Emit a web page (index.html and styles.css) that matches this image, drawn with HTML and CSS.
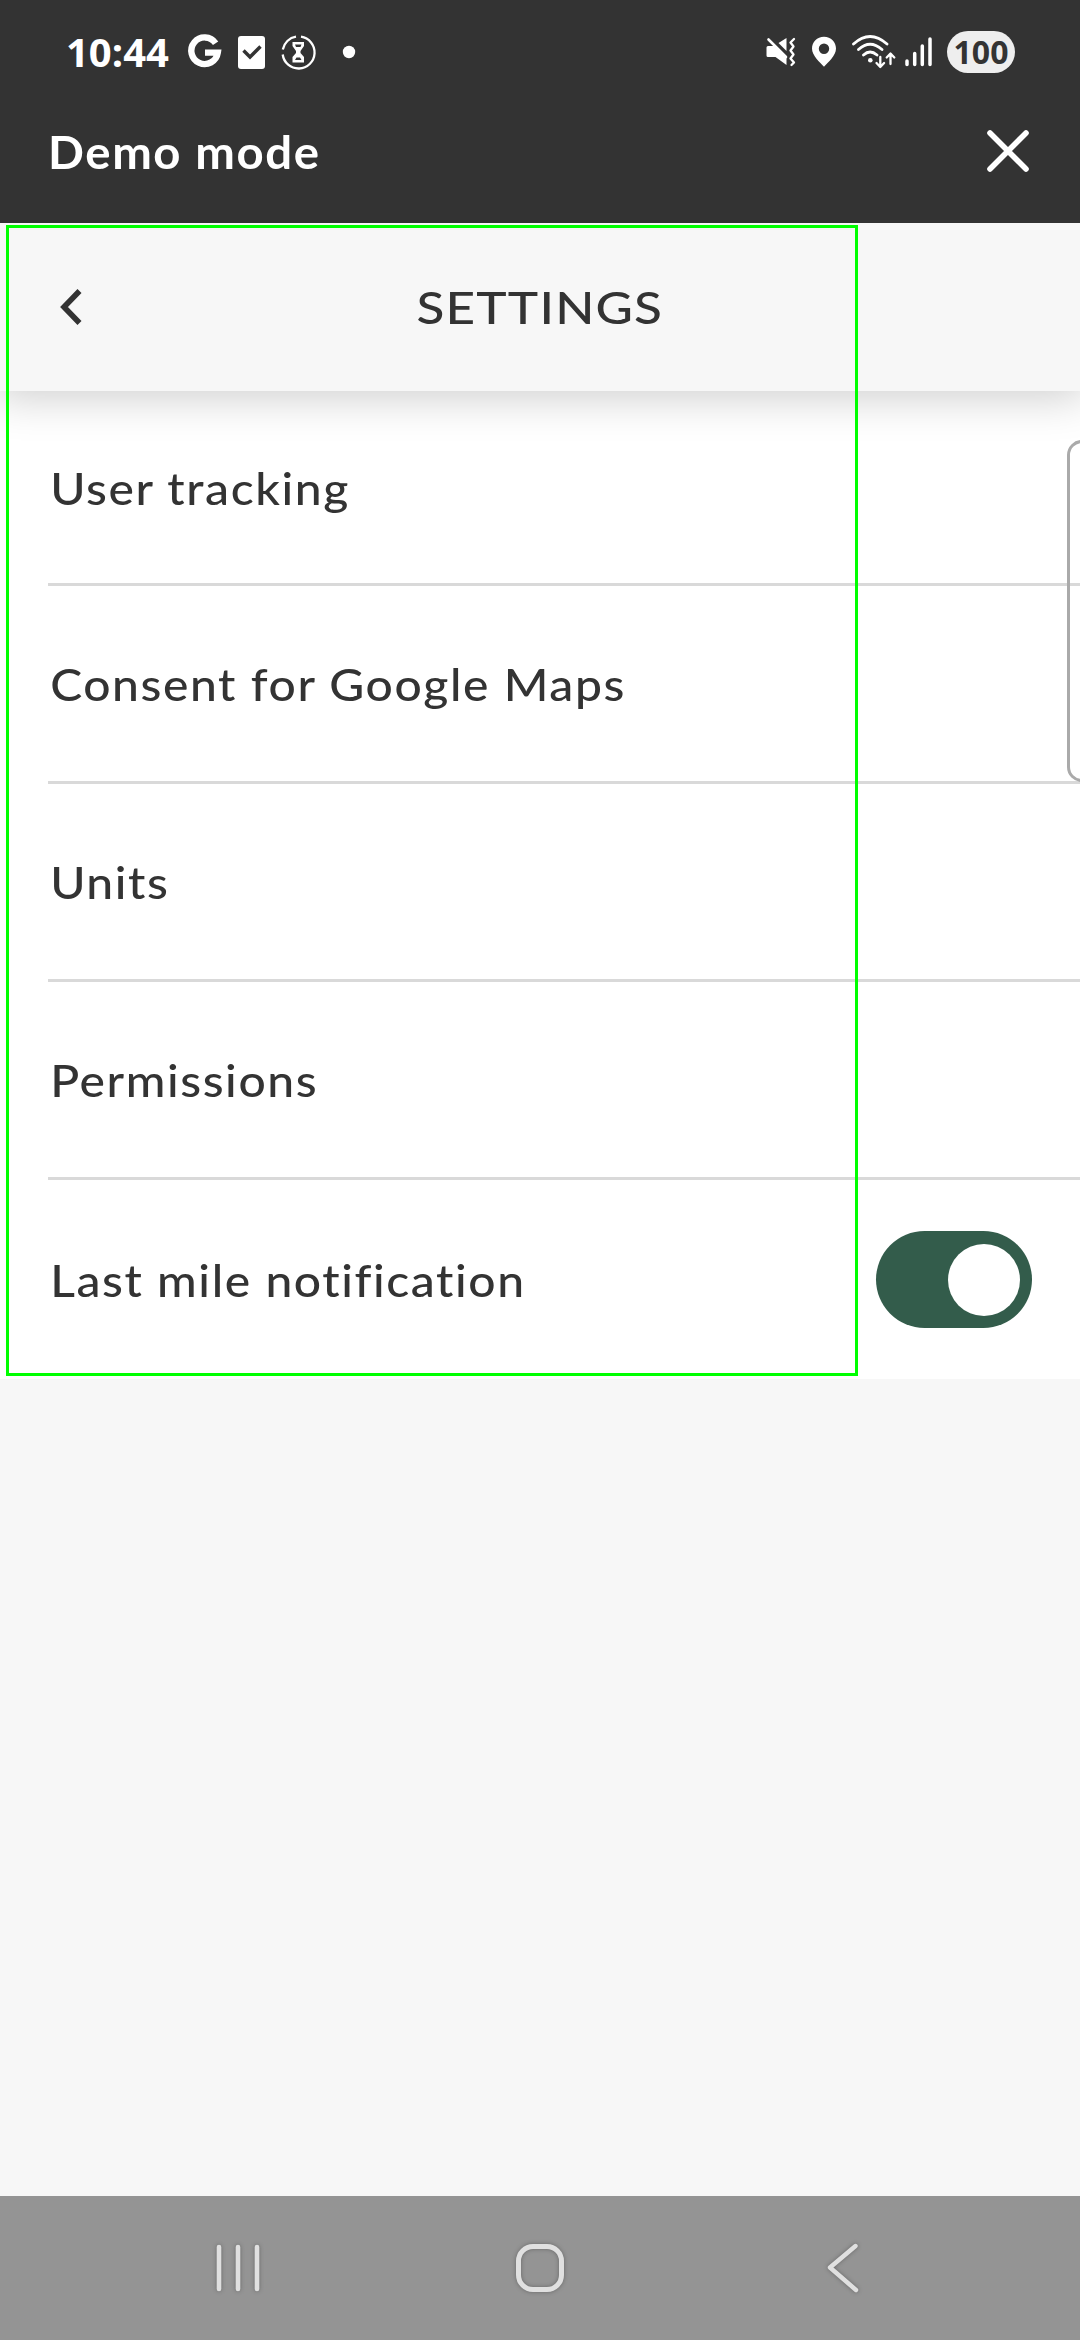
FILE: index.html
```html
<!DOCTYPE html>
<html lang="en">
<head>
<meta charset="utf-8">
<title>Settings</title>
<link rel="stylesheet" href="styles.css">
</head>
<body>
<div class="screen">
  <div class="top">
    <div class="status">
      <span class="clock">10:44</span>
      <svg class="left-icons" width="172" height="42" viewBox="186 31 172 42" fill="none">
        <path d="M215.600 43.200A13.300 13.300 0 1 0 217.800 52.600H205" stroke="#fff" stroke-width="6.400"/>
        <rect x="238" y="36" width="27" height="33" rx="3" fill="#fff"/>
        <path d="M243.500 50.500L250 57L260.500 46.500" stroke="#333" stroke-width="3.400"/>
        <path d="M301 36.700A16 16 0 1 1 282.700 54.500M282.800 49.500A16 16 0 0 1 296 36.700" stroke="#fff" stroke-width="2.300"/>
        <path d="M292.500 42H304V46L300.500 51V53L304 57V62.500H292.500V57L296 53V51L292.500 46Z" fill="#fff"/>
        <path d="M295 44.500H301.500L300.500 47H296ZM295 60L296.500 57.500H300L301.500 60Z" fill="#333"/>
        <circle cx="349" cy="52" r="6.200" fill="#fff"/>
      </svg>
      <svg class="right-icons" width="170" height="42" viewBox="765 31 170 42" fill="none" stroke="#fff" stroke-linecap="round" stroke-linejoin="round">
        <path d="M768 46H775.500L786.500 57V65L775.500 57H768Q766.500 57 766.500 55.500V47.500Q766.500 46 768 46ZM778.500 43L786.500 38V51Z" fill="#fff" stroke="none"/>
        <path d="M768.500 39.500L786 57" stroke-width="2.600"/>
        <path d="M794 39L790.500 42.500L793.500 46.500L790.500 50.500L793.500 54.500L790.500 58.500L794 62.500L791.500 65" stroke-width="2.300"/>
        <path fill-rule="evenodd" d="M824 36.700C817 36.700 812 42 812 48.500C812 56 820 62 824 66.800C828 62 836 56 836 48.500C836 42 831 36.700 824 36.700ZM824 43.500A5.200 5.200 0 1 1 824 53.900A5.200 5.200 0 1 1 824 43.500Z" fill="#fff" stroke="none"/>
        <path d="M853.500 44Q870 29 887 44M858.500 49.500Q870 39 882 49.500M863.500 55Q870 49 877 55" stroke-width="2.800"/>
        <circle cx="870.300" cy="60.300" r="2.300" fill="#fff" stroke="none"/>
        <path d="M880.300 57V66.500M876.500 63L880.300 67L884.100 63M890.500 64V54M886.700 57.500L890.500 53.500L894.300 57.500" stroke-width="2.300"/>
        <path d="M907 61V64.500M914.700 53.500V64.500M922.300 46V64.500M930 39V64.500" stroke-width="3.500"/>
      </svg>
      <span class="battery">100</span>
    </div>
    <div class="demo">
      <span class="demo-title">Demo mode</span>
      <svg width="42" height="42" viewBox="0 0 42 42"><path d="M3 3L39 39M39 3L3 39" stroke="#fff" stroke-width="5.600" stroke-linecap="round"/></svg>
    </div>
  </div>
  <div class="header">
    <svg width="22" height="36" viewBox="0 0 22 36"><path d="M19.500 2L4 18L19.500 34" fill="none" stroke="#333" stroke-width="5.600"/></svg>
    <h1 class="title">SETTINGS</h1>
  </div>
  <div class="list">
    <div class="row first"><span class="label">User tracking</span></div>
    <div class="row"><span class="label">Consent for Google Maps</span></div>
    <div class="row"><span class="label">Units</span></div>
    <div class="row"><span class="label">Permissions</span></div>
    <div class="row last"><span class="label">Last mile notification</span><span class="toggle"><span class="knob"></span></span></div>
  </div>
  <div class="nav">
    <svg width="1080" height="144" viewBox="0 2196 1080 144" fill="none" stroke="#e0e0e0" stroke-linecap="round" stroke-linejoin="round">
      <path d="M219 2247V2289M238 2247V2289M257 2247V2289" stroke-width="4.600"/>
      <rect x="518.500" y="2246.500" width="43" height="43" rx="14.500" stroke-width="5"/>
      <path d="M855.500 2246L830 2267.500L856 2290" stroke-width="4.400"/>
    </svg>
  </div>
  <div class="side-box"></div>
  <div class="focus"></div>
</div>
</body>
</html>
```
FILE: styles.css
```css
* { box-sizing: border-box; }
body { margin: 0; }
.screen {
  position: relative;
  display: flex;
  flex-direction: column;
  width: 1080px;
  height: 2340px;
  overflow: hidden;
  background: #f7f7f7;
  color: #333;
  font-family: Lato, "Open Sans", sans-serif;
}
.top {
  position: relative;
  z-index: 2;
  height: 223px;
  background: #333;
  color: #fff;
}
.status {
  display: flex;
  align-items: center;
  height: 104px;
  padding: 0 65px 0 66px;
  font-family: "Open Sans", "Noto Sans", sans-serif;
  font-weight: 700;
}
.clock { width: 120px; font-size: 40px; line-height: 42px; }
.right-icons { margin-left: auto; }
.battery {
  width: 68px;
  height: 42px;
  margin-left: 12px;
  border-radius: 21px;
  background: #eee;
  color: #333;
  font-size: 32px;
  line-height: 41px;
  text-align: center;
}
.demo {
  display: flex;
  justify-content: space-between;
  align-items: center;
  height: 94px;
  padding: 0 51px 0 48px;
}
.demo-title {
  padding-top: 2px;
  font-size: 45px;
  font-weight: 700;
  line-height: 54px;
  letter-spacing: 1.5px;
  transform: scaleX(1.052);
  transform-origin: left;
}
.header {
  position: relative;
  z-index: 1;
  display: flex;
  align-items: center;
  height: 168px;
  padding-left: 60px;
  background: #f7f7f7;
  box-shadow: 0 0 42px 6px rgba(0, 0, 0, .2);
}
.title {
  flex: 1;
  margin: 0;
  padding-right: 82px;
  text-align: center;
  font-size: 45px;
  font-weight: 500;
  line-height: 54px;
  letter-spacing: 1px;
  transform: scaleX(1.14);
  transform-origin: 459px 50%;
}
.list { background: #fff; height: 988px; padding-left: 48px; }
.row {
  display: flex;
  align-items: center;
  justify-content: space-between;
  height: 198px;
  padding-right: 48px;
  border-bottom: 3px solid #d9d9d9;
}
.first { height: 195px; }
.last { height: 199px; border-bottom: 0; }
.label {
  padding: 1px 0 0 2px;
  font-size: 45px;
  font-weight: 500;
  line-height: 54px;
  letter-spacing: 1.5px;
  white-space: nowrap;
  transform: scaleX(1.066);
  transform-origin: left;
}
.toggle {
  display: flex;
  align-items: center;
  justify-content: flex-end;
  width: 156px;
  height: 97px;
  padding-right: 12px;
  border-radius: 49px;
  background: #335c4b;
}
.knob { width: 72px; height: 72px; border-radius: 50%; background: #fff; }
.nav { height: 144px; margin-top: auto; background: #949494; }
.nav svg { display: block; filter: drop-shadow(0 0 2px rgba(0, 0, 0, .3)); }
.side-box {
  position: absolute;
  left: 1067px;
  top: 440px;
  width: 60px;
  height: 342px;
  border: 3px solid #aaa;
  border-radius: 15px;
}
.focus {
  position: absolute;
  z-index: 3;
  left: 6px;
  top: 225px;
  width: 852px;
  height: 1151px;
  border: 3px solid #0f0;
}
```
